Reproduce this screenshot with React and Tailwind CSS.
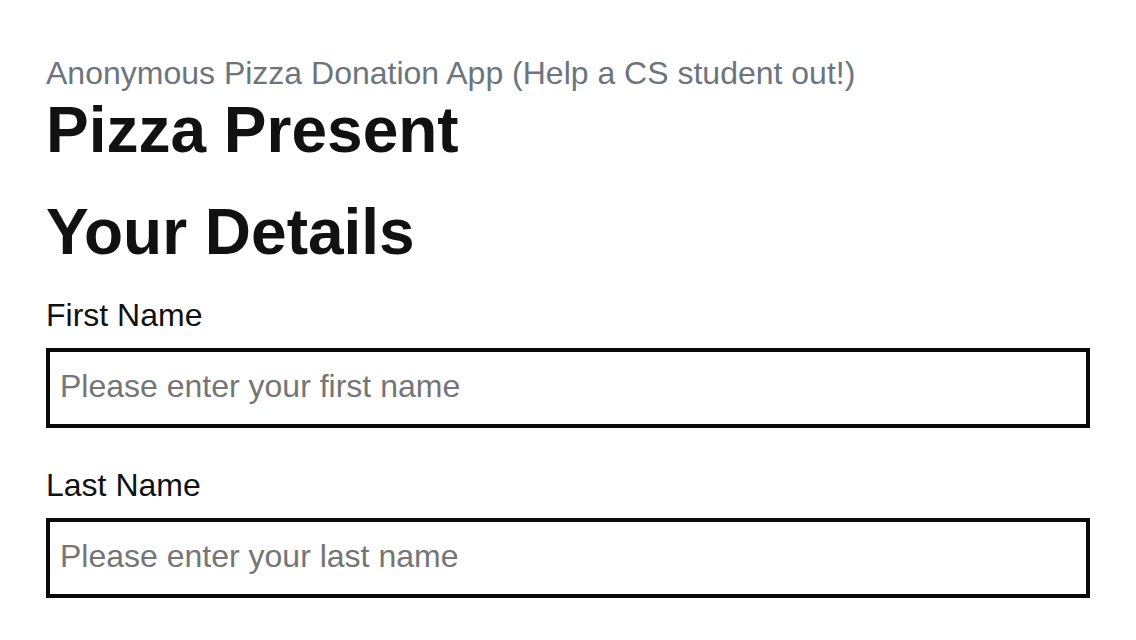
export default function App() {
  return (
    <div
      className="min-h-screen bg-white px-[46px] pt-[54px] text-[#111111]"
      style={{ fontFamily: '"Liberation Sans", Arial, sans-serif' }}
    >
      <p className="text-[32px] leading-[38px] text-[#6c757d]">
        Anonymous Pizza Donation App (Help a CS student out!)
      </p>
      <h1 className="text-[64px] font-bold leading-[76px]">Pizza Present</h1>

      <h2 className="mt-[26px] text-[64px] font-bold leading-[76px]">Your Details</h2>

      <form className="mt-[26px] flex flex-col">
        <label htmlFor="first" className="text-[32px] leading-[38px]">
          First Name
        </label>
        <input
          id="first"
          type="text"
          placeholder="Please enter your first name"
          className="mt-[14px] h-[80px] w-full border-4 border-[#0a0a0a] px-[10px] pb-1 text-[32px] placeholder:text-[#757575] focus:outline-none"
        />

        <label htmlFor="last" className="mt-[38px] text-[32px] leading-[38px]">
          Last Name
        </label>
        <input
          id="last"
          type="text"
          placeholder="Please enter your last name"
          className="mt-[14px] h-[80px] w-full border-4 border-[#0a0a0a] px-[10px] pb-1 text-[32px] placeholder:text-[#757575] focus:outline-none"
        />
      </form>
    </div>
  )
}
